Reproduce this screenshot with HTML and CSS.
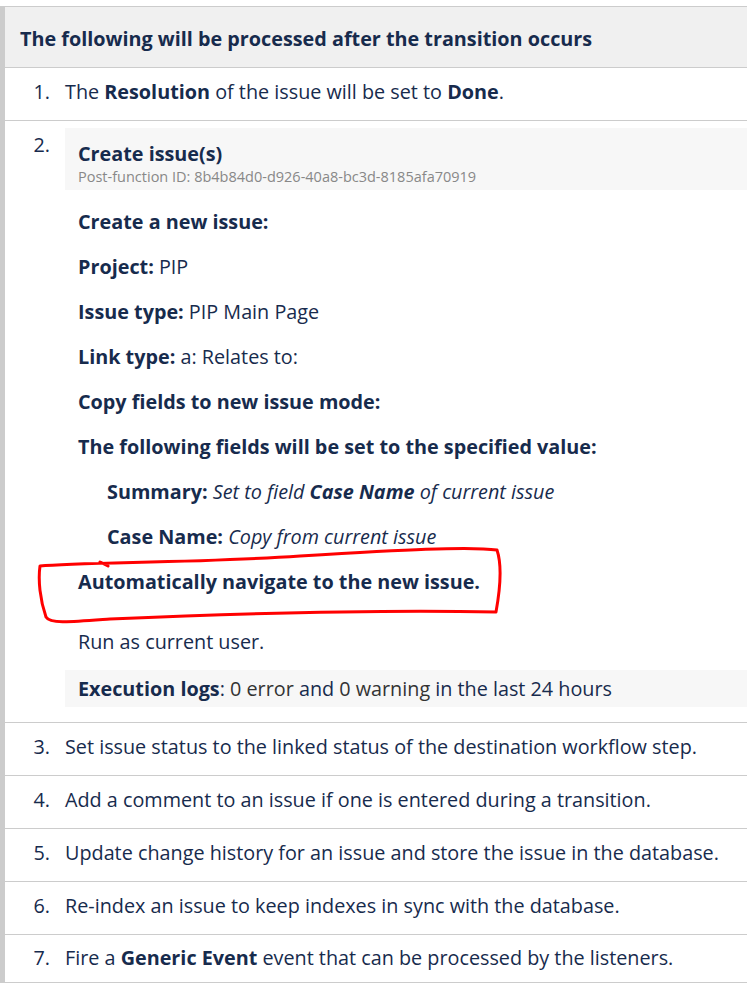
FILE: index.html
```html
<!DOCTYPE html>
<html>
<head>
<meta charset="utf-8">
<link rel="stylesheet" href="styles.css">
</head>
<body>
<div class="panel">
  <div class="panel-head">The following will be processed after the transition occurs</div>
  <ol class="steps">
    <li class="step"><span class="num">1.</span><div class="txt">The <b>Resolution</b> of the issue will be set to <b>Done</b>.</div></li>
    <li class="step step-big"><span class="num num-top">2.</span>
      <div class="pf">
        <div class="pf-head">
          <div class="pf-title">Create issue(s)</div>
          <div class="pf-id">Post-function ID: 8b4b84d0-d926-40a8-bc3d-8185afa70919</div>
        </div>
        <div class="pf-body">
          <div class="line"><b>Create a new issue:</b></div>
          <div class="line"><b>Project:</b> PIP</div>
          <div class="line"><b>Issue type:</b> PIP Main Page</div>
          <div class="line"><b>Link type:</b> a: Relates to:</div>
          <div class="line"><b>Copy fields to new issue mode:</b></div>
          <div class="line"><b>The following fields will be set to the specified value:</b></div>
          <div class="line indent"><b>Summary:</b> <i>Set to field <b>Case Name</b> of current issue</i></div>
          <div class="line indent"><b>Case Name:</b> <i>Copy from current issue</i></div>
          <div class="line"><b>Automatically navigate to the new issue.</b></div>
          <div class="line run">Run as current user.</div>
        </div>
        <div class="pf-logs"><b>Execution logs</b>: <span class="dark">0 error</span> and <span class="dark">0 warning</span> in the last 24 hours</div>
      </div>
    </li>
    <li class="step"><span class="num">3.</span><div class="txt">Set issue status to the linked status of the destination workflow step.</div></li>
    <li class="step"><span class="num">4.</span><div class="txt">Add a comment to an issue if one is entered during a transition.</div></li>
    <li class="step"><span class="num">5.</span><div class="txt">Update change history for an issue and store the issue in the database.</div></li>
    <li class="step"><span class="num">6.</span><div class="txt">Re-index an issue to keep indexes in sync with the database.</div></li>
    <li class="step last"><span class="num">7.</span><div class="txt">Fire a <b>Generic Event</b> event that can be processed by the listeners.</div></li>
  </ol>
</div>
<svg class="annot" width="747" height="985" viewBox="0 0 747 985" xmlns="http://www.w3.org/2000/svg">
  <path d="M 40 566 C 80 562, 200 563, 300 556 C 400 550, 470 546, 497 550 C 502 565, 500 590, 496 612 C 400 610, 250 613, 110 619 C 70 622, 50 624, 46 617 C 40 600, 38 580, 40 566 Z M 100 562 L 108 566" fill="none" stroke="#f00" stroke-width="3" stroke-linejoin="round" stroke-linecap="round"/>
</svg>
</body>
</html>
```
FILE: styles.css
```css
html, body {
  margin: 0;
  padding: 0;
  background: #fff;
}
body {
  font-family: "Open Sans", "Noto Sans", sans-serif;
  font-size: 19.8px;
  color: #172b4d;
}
.panel {
  margin-top: 6px;
  border-left: 5px solid #ccc;
  border-top: 1px solid #ccc;
}
.panel-head {
  background: #f0f0f0;
  height: 57px;
  line-height: 57px;
  padding-top: 3px;
  padding-left: 15px;
  font-weight: 700;
  border-bottom: 1px solid #ccc;
  white-space: nowrap;
}
.steps {
  list-style: none;
  margin: 0;
  padding: 0;
}
.step {
  box-sizing: border-box;
  display: flex;
  align-items: center;
  height: 53px;
  padding-bottom: 5px;
  border-bottom: 1px solid #ccc;
  white-space: nowrap;
}
.step.last {
  height: 48px;
  padding-bottom: 3px;
}
.num {
  width: 45px;
  text-align: right;
  padding-right: 15px;
  flex: none;
}
.step-big {
  height: auto;
  align-items: flex-start;
  padding-top: 7px;
  padding-bottom: 15px;
}
.num-top {
  padding-top: 3px;
}
.pf {
  flex: 1;
}
.pf-head {
  background: #f7f7f7;
  height: 49px;
  padding-top: 13px;
  padding-left: 13px;
}
.pf-title {
  font-weight: 700;
  line-height: 26px;
}
.pf-id {
  font-size: 14.5px;
  color: #888;
  line-height: 20px;
}
.pf-body {
  padding-left: 13px;
  padding-top: 9px;
}
.line {
  height: 45px;
  line-height: 45px;
}
.indent {
  padding-left: 29px;
}
.run {
  margin-top: 15px;
}
.pf-logs {
  background: #f7f7f7;
  height: 37px;
  line-height: 37px;
  padding-left: 13px;
  margin-top: 6px;
}
.dark {
  color: #333;
}
.annot {
  position: absolute;
  left: 0;
  top: 0;
  pointer-events: none;
}
```
